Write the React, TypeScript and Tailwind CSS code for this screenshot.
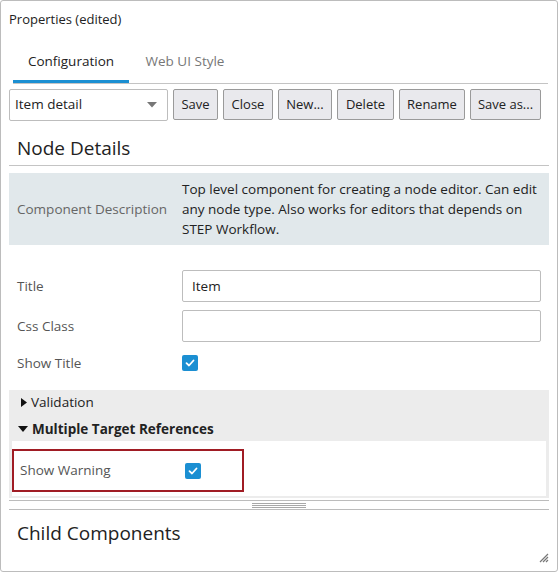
import { useState } from 'react';

const FONT = { fontFamily: '"Open Sans", "Noto Sans", sans-serif' };

function CheckBox({ checked }: { checked: boolean }) {
  return (
    <span className="flex h-4 w-4 items-center justify-center rounded-[2px] bg-[#1b8fd2]">
      {checked && (
        <svg width="12" height="12" viewBox="0 0 12 12" fill="none">
          <path d="M2.5 6.2 L5 8.5 L9.5 3.5" stroke="white" strokeWidth="1.8" strokeLinecap="round" strokeLinejoin="round" />
        </svg>
      )}
    </span>
  );
}

function ToolButton({ label, width }: { label: string; width: string }) {
  return (
    <button
      className={`h-[31px] whitespace-nowrap rounded-[2px] border border-[#9a9a9a] bg-[#e9e9ed] px-0 text-[13px] text-[#222] ${width}`}
    >
      {label}
    </button>
  );
}

function Field({ label, value }: { label: string; value?: string }) {
  return (
    <div className="flex h-[32px] items-center">
      <span className="w-[165px] text-[13.5px] text-[#555]">{label}</span>
      <div className="flex h-[32px] flex-1 items-center rounded-[2px] border border-[#bdbdbd] px-[9px] text-[13.5px] text-[#222]">
        {value}
      </div>
    </div>
  );
}

export default function App() {
  const [tab] = useState('config');

  return (
    <div className="h-[572px] w-[558px] bg-white" style={FONT}>
      <div className="flex h-full flex-col rounded-[3px] border border-[#bcbcbc]">
        {/* Header */}
        <div className="px-[8px] pt-[9px] text-[13px] text-[#222]">Properties (edited)</div>

        {/* Tabs */}
        <div className="ml-[12px] mr-[9px] mt-[15px] flex border-b border-[#c4c4c4]">
          <div
            className={`-mb-px h-[38px] w-[116px] border-b-[3px] pt-[6px] text-center text-[13.5px] ${
              tab === 'config' ? 'border-[#1b8fd2] text-[#222]' : 'border-transparent text-[#777]'
            }`}
          >
            Configuration
          </div>
          <div className="h-[38px] w-[112px] pt-[6px] text-center text-[13.5px] text-[#777]">Web UI Style</div>
        </div>

        {/* Toolbar */}
        <div className="mt-[5px] flex items-center gap-[5px] px-[8px]">
          <div className="flex h-[32px] w-[159px] items-center justify-between rounded-[2px] border border-[#bdbdbd] pl-[5px] pr-[10px] text-[13.5px] text-[#222]">
            <span>Item detail</span>
            <svg width="10" height="6" viewBox="0 0 10 6">
              <path d="M0 0 H10 L5 5.5 Z" fill="#777" />
            </svg>
          </div>
          <ToolButton label="Save" width="w-[45px]" />
          <ToolButton label="Close" width="w-[50px]" />
          <ToolButton label="New..." width="w-[54px]" />
          <ToolButton label="Delete" width="w-[57px]" />
          <ToolButton label="Rename" width="w-[66px]" />
          <ToolButton label="Save as..." width="w-[71px]" />
        </div>

        {/* Node Details */}
        <div className="mx-[8px] mt-[13px] border-b border-[#c4c4c4] pb-[3px] pl-[8px] text-[19px] text-[#222]">
          Node Details
        </div>

        <div className="mx-[8px] mt-[7px] flex items-center bg-[#e1e8eb] py-[6px] pl-[8px] pr-[4px]">
          <span className="w-[165px] text-[13.5px] text-[#666]">Component Description</span>
          <p className="flex-1 text-[13.5px] leading-[20px] text-[#222]">
            Top level component for creating a node editor. Can edit any node type. Also works for editors that depends on
            STEP Workflow.
          </p>
        </div>

        <div className="ml-[16px] mr-[16px] mt-[25px] flex flex-col gap-[8px]">
          <Field label="Title" value="Item" />
          <Field label="Css Class" />
          <div className="flex h-[26px] items-center">
            <span className="w-[165px] text-[13.5px] text-[#555]">Show Title</span>
            <CheckBox checked />
          </div>
        </div>

        {/* Accordion */}
        <div className="mx-[8px] mt-[14px] bg-[#ececec] px-[3px] pb-[2px]">
          <div className="flex h-[24px] items-center gap-[4px] pl-[9px] text-[13.5px] text-[#222]">
            <svg width="6" height="9" viewBox="0 0 6 9">
              <path d="M0 0 L6 4.5 L0 9 Z" fill="#111" />
            </svg>
            Validation
          </div>
          <div className="flex h-[27px] items-center gap-[4px] pl-[6px] pt-[3px] text-[13.5px] font-bold text-[#222]">
            <svg width="10" height="6" viewBox="0 0 10 6">
              <path d="M0 0 H10 L5 6 Z" fill="#111" />
            </svg>
            Multiple Target References
          </div>
          <div className="bg-white pb-[4px] pt-[8px]">
            <div className="flex h-[43px] w-[232px] items-center border-2 border-[#a01c24] pl-[6px]">
              <span className="w-[165px] text-[13.5px] text-[#555]">Show Warning</span>
              <CheckBox checked />
            </div>
          </div>
        </div>

        {/* Splitter */}
        <div className="mx-[8px] mt-[2px] flex h-[10px] justify-center border-y border-[#bcbcbc]">
          <div className="flex w-[54px] flex-col justify-center gap-[1px]">
            <div className="h-px bg-[#a8a8a8]" />
            <div className="h-px bg-[#a8a8a8]" />
            <div className="h-px bg-[#a8a8a8]" />
          </div>
        </div>

        {/* Child Components */}
        <div className="flex flex-1 items-end justify-between pl-[16px] pr-[8px] pb-[8px]">
          <div className="mb-[16px] text-[19px] text-[#222]">Child Components</div>
          <svg width="12" height="12" viewBox="0 0 12 12">
            <path d="M11 3 L3 11 M11 6 L6 11 M11 9 L9 11" stroke="#777" strokeWidth="1.2" />
          </svg>
        </div>
      </div>
    </div>
  );
}
